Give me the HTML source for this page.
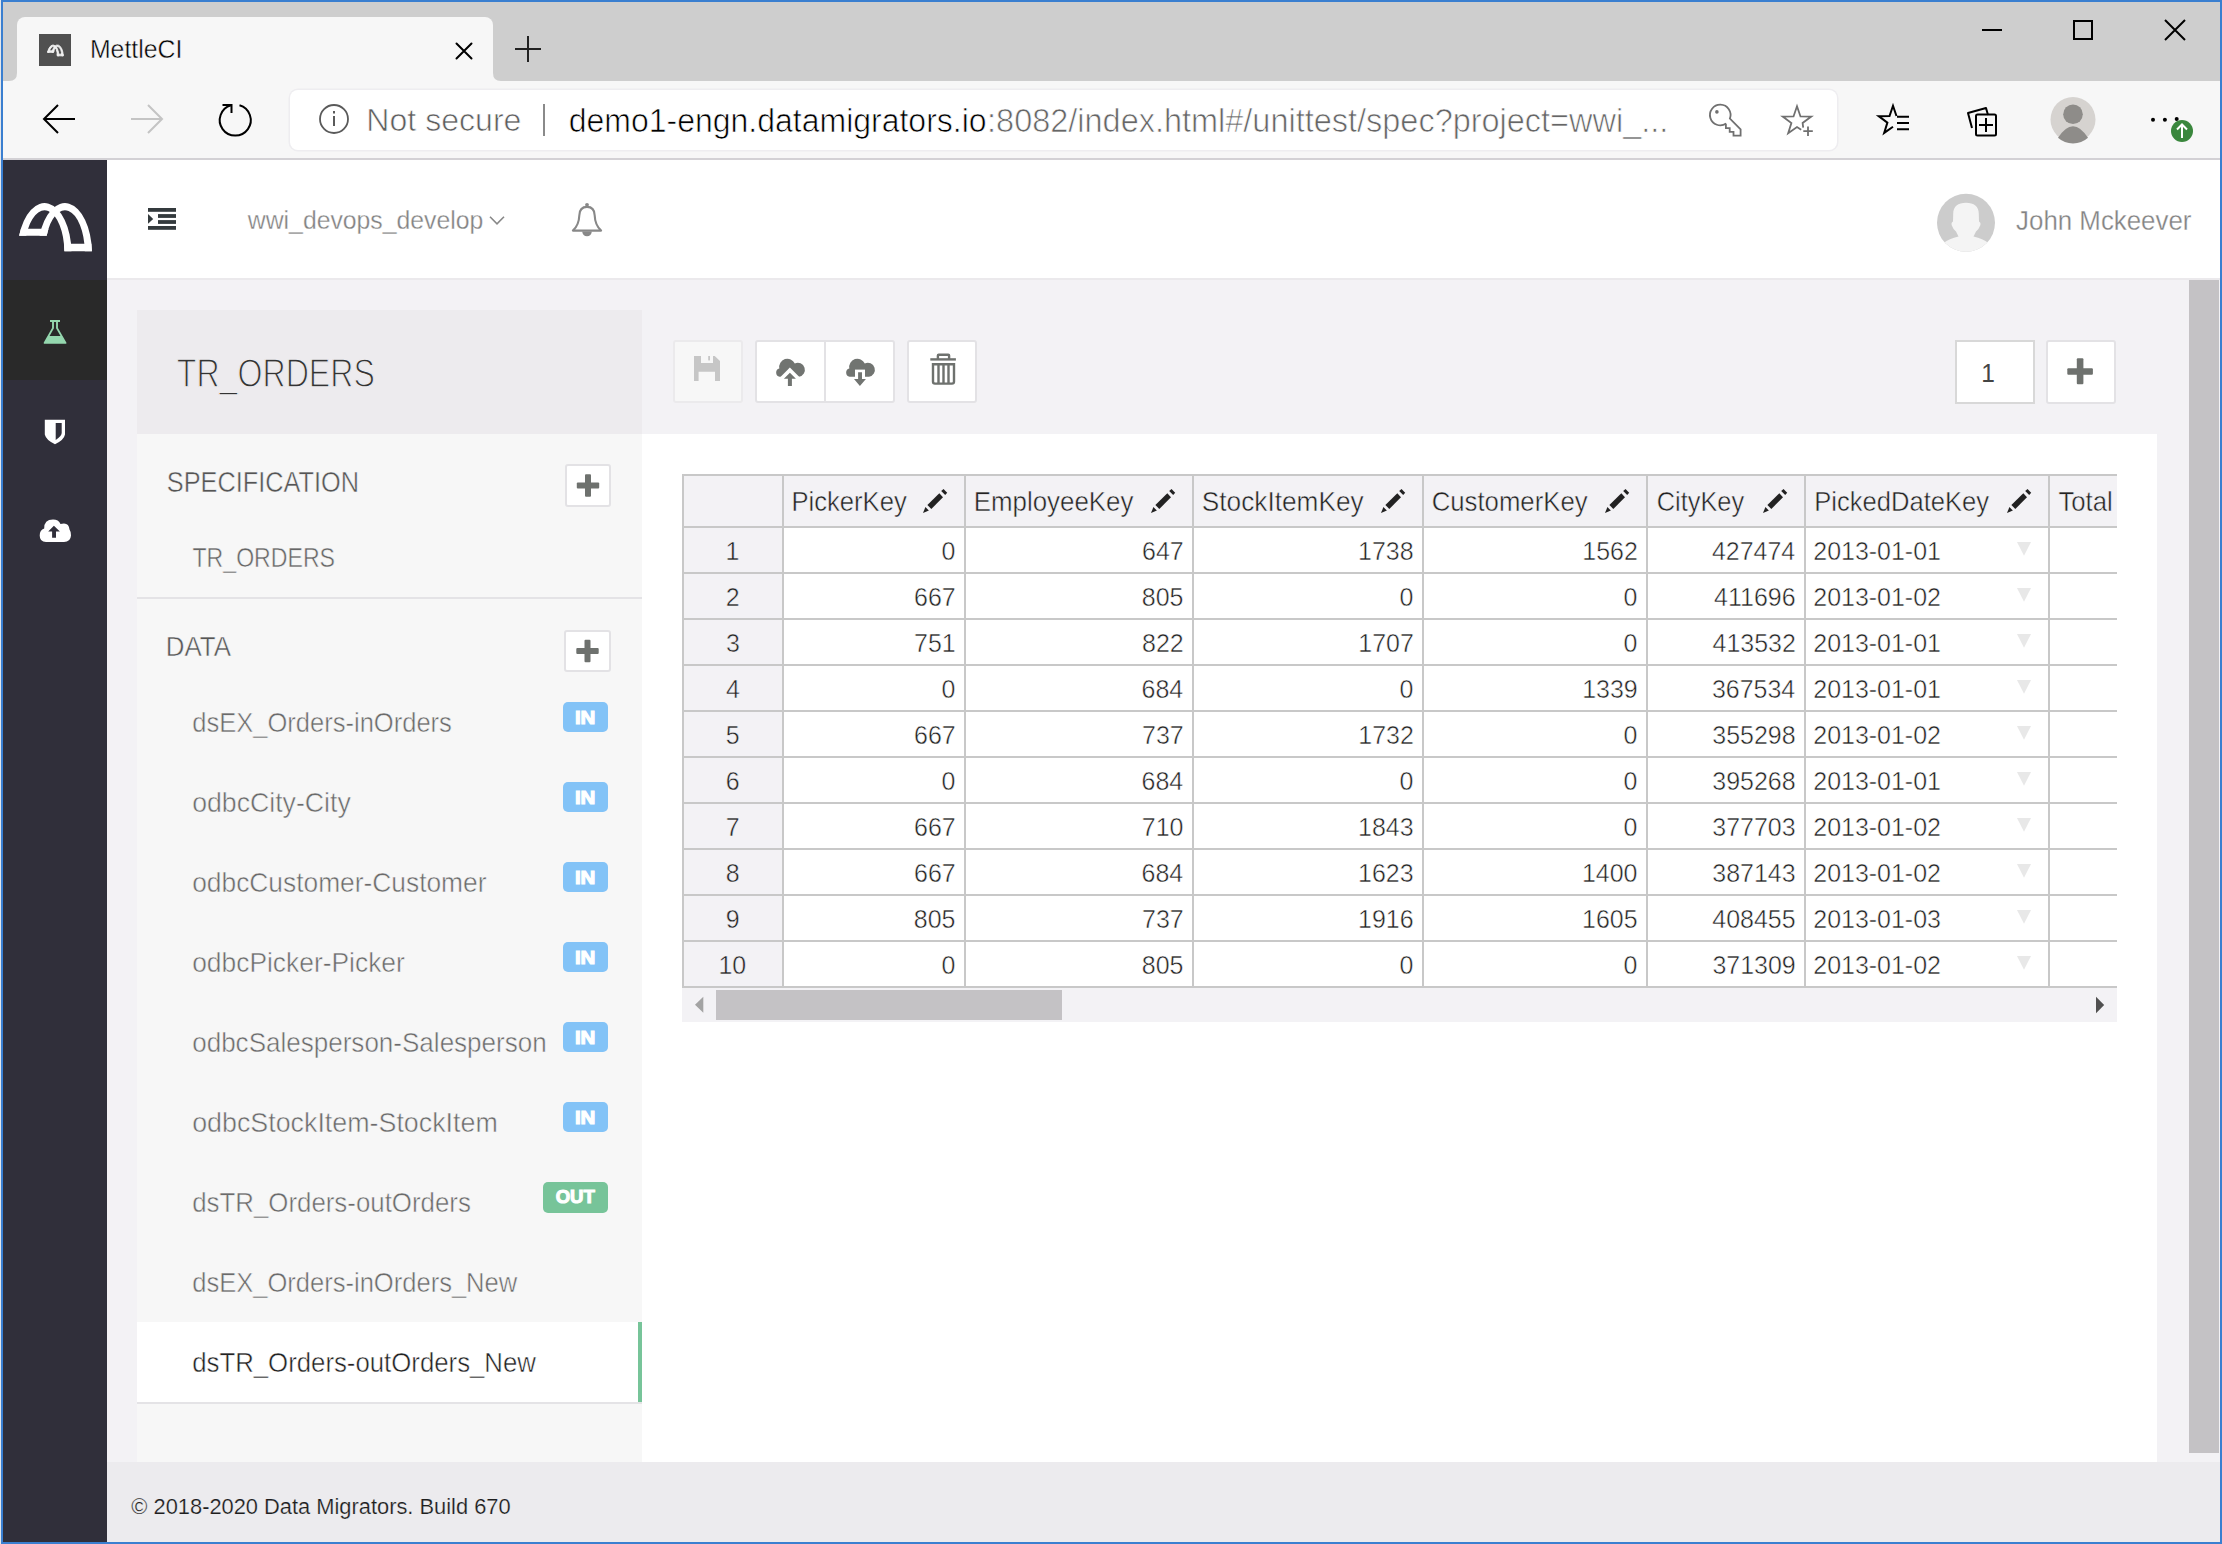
<!DOCTYPE html>
<html><head><meta charset="utf-8"><title>MettleCI</title>
<style>
html,body{margin:0;padding:0;}
body{width:2222px;height:1544px;position:relative;overflow:hidden;background:#3a7fd0;font-family:"Liberation Sans",sans-serif;}
#root>div{position:absolute;}
#root>svg{position:absolute;}
svg text{font-family:"Liberation Sans",sans-serif;white-space:pre;}
</style></head><body><div id="root">
<div style="left:0px;top:0px;width:1px;height:1544px;background:#e4e6ea;"></div>
<div style="left:3px;top:2px;width:2217px;height:1540px;background:#f3f2f5;"></div>
<div style="left:3px;top:2px;width:2217px;height:79px;background:#cecece;"></div>
<div style="left:17px;top:17px;width:476px;height:64px;background:#f7f7f7;border-radius:8px 8px 0 0"></div>
<div style="left:3px;top:81px;width:2217px;height:77px;background:#f7f7f7;"></div>
<div style="left:3px;top:158px;width:2217px;height:2px;background:#d3d1d5;"></div>
<div style="left:290px;top:90px;width:1547px;height:60px;background:#ffffff;border-radius:8px;box-shadow:0 0 0 1.5px #eeedf0"></div>
<div style="left:3px;top:160px;width:104px;height:1382px;background:#302f3a;"></div>
<div style="left:3px;top:280px;width:104px;height:100px;background:#292929;"></div>
<div style="left:107px;top:160px;width:2113px;height:118px;background:#ffffff;"></div>
<div style="left:107px;top:278px;width:2113px;height:2px;background:#ebe9ec;"></div>
<div style="left:107px;top:280px;width:2082px;height:1182px;background:#f3f2f5;"></div>
<div style="left:2189px;top:280px;width:31px;height:1182px;background:#f3f2f5;"></div>
<div style="left:2189px;top:280px;width:30px;height:1173px;background:#c4c2c5;"></div>
<div style="left:107px;top:1462px;width:2113px;height:80px;background:#ecebee;"></div>
<div style="left:137px;top:310px;width:505px;height:124px;background:#edebee;"></div>
<div style="left:137px;top:434px;width:505px;height:1028px;background:#f7f7f7;"></div>
<div style="left:642px;top:434px;width:1515px;height:1028px;background:#ffffff;"></div>
<div style="left:137px;top:597px;width:505px;height:2px;background:#e4e3e6;"></div>
<div style="left:565px;top:464px;width:46px;height:43px;background:#ffffff;box-sizing:border-box;border:2px solid #e3e2e5;border-radius:3px"></div>
<div style="left:564px;top:630px;width:47px;height:42px;background:#ffffff;box-sizing:border-box;border:2px solid #e3e2e5;border-radius:3px"></div>
<div style="left:137px;top:1322px;width:505px;height:80px;background:#ffffff;"></div>
<div style="left:137px;top:1402px;width:505px;height:2px;background:#e4e3e6;"></div>
<div style="left:638px;top:1322px;width:4px;height:80px;background:#77c499;"></div>
<div style="left:563px;top:702px;width:45px;height:30px;background:#83c3f7;border-radius:5px"></div>
<div style="left:563px;top:782px;width:45px;height:30px;background:#83c3f7;border-radius:5px"></div>
<div style="left:563px;top:862px;width:45px;height:30px;background:#83c3f7;border-radius:5px"></div>
<div style="left:563px;top:942px;width:45px;height:30px;background:#83c3f7;border-radius:5px"></div>
<div style="left:563px;top:1022px;width:45px;height:30px;background:#83c3f7;border-radius:5px"></div>
<div style="left:563px;top:1102px;width:45px;height:30px;background:#83c3f7;border-radius:5px"></div>
<div style="left:543px;top:1182px;width:65px;height:31px;background:#77c499;border-radius:5px"></div>
<div style="left:673px;top:340px;width:70px;height:63px;background:#f7f7f7;box-sizing:border-box;border:2px solid #ebeaec;border-radius:3px;"></div>
<div style="left:755px;top:340px;width:140px;height:63px;background:#ffffff;box-sizing:border-box;border:2px solid #e3e2e5;border-radius:3px;"></div>
<div style="left:824px;top:342px;width:2px;height:59px;background:#e3e2e5;"></div>
<div style="left:907px;top:340px;width:70px;height:63px;background:#ffffff;box-sizing:border-box;border:2px solid #e3e2e5;border-radius:3px;"></div>
<div style="left:1955px;top:340px;width:80px;height:64px;background:#ffffff;box-sizing:border-box;border:2px solid #d8d8d8"></div>
<div style="left:2046px;top:340px;width:70px;height:64px;background:#ffffff;box-sizing:border-box;border:2px solid #e3e2e5;border-radius:3px;"></div>
<div style="left:682px;top:474px;width:1435px;height:54px;background:#f3f2f5;"></div>
<div style="left:682px;top:528px;width:102px;height:460px;background:#f3f2f5;"></div>
<div style="left:682px;top:474px;width:1435px;height:2px;background:#c8c8c8;"></div>
<div style="left:682px;top:526px;width:1435px;height:2px;background:#c8c8c8;"></div>
<div style="left:682px;top:572px;width:1435px;height:2px;background:#c8c8c8;"></div>
<div style="left:682px;top:618px;width:1435px;height:2px;background:#c8c8c8;"></div>
<div style="left:682px;top:664px;width:1435px;height:2px;background:#c8c8c8;"></div>
<div style="left:682px;top:710px;width:1435px;height:2px;background:#c8c8c8;"></div>
<div style="left:682px;top:756px;width:1435px;height:2px;background:#c8c8c8;"></div>
<div style="left:682px;top:802px;width:1435px;height:2px;background:#c8c8c8;"></div>
<div style="left:682px;top:848px;width:1435px;height:2px;background:#c8c8c8;"></div>
<div style="left:682px;top:894px;width:1435px;height:2px;background:#c8c8c8;"></div>
<div style="left:682px;top:940px;width:1435px;height:2px;background:#c8c8c8;"></div>
<div style="left:682px;top:986px;width:1435px;height:2px;background:#c8c8c8;"></div>
<div style="left:682px;top:474px;width:2px;height:514px;background:#c8c8c8;"></div>
<div style="left:782px;top:474px;width:2px;height:514px;background:#c8c8c8;"></div>
<div style="left:964px;top:474px;width:2px;height:514px;background:#c8c8c8;"></div>
<div style="left:1192px;top:474px;width:2px;height:514px;background:#c8c8c8;"></div>
<div style="left:1422px;top:474px;width:2px;height:514px;background:#c8c8c8;"></div>
<div style="left:1646px;top:474px;width:2px;height:514px;background:#c8c8c8;"></div>
<div style="left:1804px;top:474px;width:2px;height:514px;background:#c8c8c8;"></div>
<div style="left:2048px;top:474px;width:2px;height:514px;background:#c8c8c8;"></div>
<div style="left:682px;top:988px;width:1435px;height:34px;background:#f3f2f5;"></div>
<div style="left:716px;top:990px;width:346px;height:30px;background:#c4c2c5;"></div>
<svg style="left:0;top:0" width="2222" height="1544" viewBox="0 0 2222 1544">
<path d="M9 81 Q17 81 17 73 L17 81 Z" fill="#f7f7f7"/>
<path d="M501 81 Q493 81 493 73 L493 81 Z" fill="#f7f7f7"/>
<rect x="39" y="34" width="32" height="32" fill="#505050"/>
<g stroke="#000" stroke-width="2" stroke-linecap="round"><path d="M456.5 43.5 L471.5 58.5 M471.5 43.5 L456.5 58.5"/></g>
<g stroke="#222" stroke-width="2"><path d="M528 36 V62 M515 49 H541"/></g>
<g stroke="#000" stroke-width="2" fill="none"><path d="M1982 30 H2002"/><rect x="2074" y="21" width="18" height="18"/><path d="M2165 20 L2185 40 M2185 20 L2165 40"/></g>
<g fill="none" stroke="#000" stroke-width="2"><path d="M75 119 H45 M58 105 L44 119 L58 133"/></g>
<g fill="none" stroke="#c4c4c4" stroke-width="2"><path d="M131 119 H161 M148 105 L162 119 L148 133"/></g>
<g fill="none" stroke="#000" stroke-width="2"><path d="M231 105.2 A15.5 15.5 0 1 0 239.5 105.2"/><path d="M222.5 105 H231.5 V113"/></g>
<circle cx="334" cy="119" r="14" fill="none" stroke="#5a5a5a" stroke-width="1.8"/><rect x="333" y="116" width="2" height="10" fill="#5a5a5a"/><rect x="333" y="111" width="2" height="2.5" fill="#5a5a5a"/>
<rect x="543" y="104" width="2" height="32" fill="#8a8a8a"/>
<g fill="none" stroke="#707070" stroke-width="1.8" stroke-linejoin="miter"><path d="M1726.2 123.4 A10.3 10.3 0 1 1 1729.9 118.6 L1740.6 129.4 V135.6 H1733.5 V131.8 H1729.7 V128.2 H1725.9 V123.8"/></g><circle cx="1716.9" cy="111.9" r="1.8" fill="#707070"/>
<g fill="none" stroke="#707070" stroke-width="1.8" stroke-linejoin="miter"><path d="M1803.20 127.60 L1802.61 123.02 L1811.27 116.56 L1800.47 116.43 L1797.00 106.20 L1793.53 116.43 L1782.73 116.56 L1791.39 123.02 L1788.18 133.34 L1797.00 127.10 L1801.20 129.80"/><path d="M1808 126.5 V136 M1803.3 131.2 H1812.8"/></g>
<g fill="none" stroke="#000" stroke-width="2" stroke-linejoin="miter"><path d="M1896.47 116.03 L1893.00 105.80 L1889.53 116.03 L1878.73 116.16 L1887.39 122.62 L1884.18 132.94 L1893.00 126.70"/><path d="M1897 116.8 H1909 M1897 123 H1909 M1897 129.2 H1909"/></g>
<g fill="none" stroke="#000" stroke-width="2" stroke-linejoin="round"><path d="M1972 128 L1968 113 L1986 108 L1988 115"/><rect x="1976" y="114.5" width="20" height="21" rx="1.5"/><path d="M1986 118 V132 M1979 125 H1993"/></g>
<circle cx="2073" cy="119.5" r="22.5" fill="#d6d3d0"/><circle cx="2073" cy="114.2" r="9.8" fill="#8e8c89"/><path d="M2058 137.8 Q2073 114.5 2088 137.8 A22.5 22.5 0 0 1 2058 137.8 Z" fill="#8e8c89"/>
<circle cx="2153" cy="119.8" r="2" fill="#000"/><circle cx="2164.9" cy="119.8" r="2" fill="#000"/><circle cx="2176.7" cy="119" r="2" fill="#000"/>
<circle cx="2182" cy="131" r="11" fill="#3a873d"/><path d="M2182 138 V124.5 M2177 129.5 L2182 124.5 L2187 129.5" stroke="#fff" stroke-width="2" fill="none"/>
<g fill="#fff"><path d="M19.15 235.8 A27.0 49.9 0 0 1 71.48 251.2 L64.38 251.2 A19.9 42.8 0 0 0 26.28 235.8 Z"/><path d="M39.55 235.8 A27.0 49.9 0 0 1 91.88 251.2 L84.78 251.2 A19.9 42.8 0 0 0 46.68 235.8 Z"/><path d="M19.15 235.8 L46.68 235.8 L48.49 228.8 L20.89 228.8 Z"/><path d="M64.38 251.2 L91.88 251.2 L91.43 243.7 L63.92 243.7 Z"/></g>
<g fill="#f0f0f0" stroke="#f0f0f0" stroke-width="4" transform="translate(43.49,-0.70) scale(0.215,0.225)"><path d="M19.15 235.8 A27.0 49.9 0 0 1 71.48 251.2 L64.38 251.2 A19.9 42.8 0 0 0 26.28 235.8 Z"/><path d="M39.55 235.8 A27.0 49.9 0 0 1 91.88 251.2 L84.78 251.2 A19.9 42.8 0 0 0 46.68 235.8 Z"/><path d="M19.15 235.8 L46.68 235.8 L48.49 228.8 L20.89 228.8 Z"/><path d="M64.38 251.2 L91.88 251.2 L91.43 243.7 L63.92 243.7 Z"/></g>
<g fill="#343a3d"><rect x="148" y="208" width="28" height="3.8"/><rect x="158" y="214.1" width="18" height="3.8"/><rect x="158" y="220.1" width="18" height="3.8"/><rect x="148" y="226" width="28" height="3.8"/><path d="M148 214 L153.2 218.9 L148 223.8 Z"/></g>
<path d="M490 216.8 L497 223.8 L504 216.8" fill="none" stroke="#888" stroke-width="1.6"/>
<g fill="none" stroke="#888" stroke-width="2.1"><path d="M572.9 230.6 Q579 225 579.3 215.5 Q579.5 206.9 587 206.9 Q594.5 206.9 594.7 215.5 Q595 225 601.1 230.6 Z" stroke-linejoin="round"/></g><circle cx="587" cy="204.8" r="1.9" fill="#888"/><path d="M582.2 231.5 A4.8 4.8 0 0 0 591.8 231.5 Z" fill="#888"/>
<circle cx="1966" cy="222.8" r="29" fill="#cccccc"/><clipPath id="avc"><circle cx="1966" cy="222.8" r="29"/></clipPath><g clip-path="url(#avc)" fill="#f4f4f4"><path d="M1953.2 214 C1953.2 206 1958 202.7 1966 202.7 C1974 202.7 1978.8 206 1978.8 214 L1979 221.5 Q1981.2 222.5 1980.2 225.5 Q1979 229 1976 231.5 L1973.5 236.5 Q1983 238.5 1988.5 243 L1996 260 L1936 260 L1943.5 243 Q1949 238.5 1958.5 236.5 L1956 231.5 Q1953 229 1951.8 225.5 Q1950.8 222.5 1953 221.5 Z"/></g>
<g fill="#94d7ae"><rect x="50" y="320" width="10" height="2"/></g><path d="M53 321.5 V328.1 L44.6 342.9 H65.5 L57 328.1 V321.5" fill="none" stroke="#94d7ae" stroke-width="1.9" stroke-linejoin="round"/><path d="M48.4 335.9 H61.6 L65.5 342.9 H44.6 Z" fill="#94d7ae"/>
<path fill="#fff" fill-rule="evenodd" d="M44.8 419.8 H65 V434.5 Q64 440 55 444.2 Q46 440 44.8 434.5 Z M55.7 423.1 V440 Q61.7 436 61.7 433 V423.1 Z"/>
<path fill="#fff" fill-rule="evenodd" d="M46 542 Q39.7 542 39.7 535.5 Q39.7 530 44.2 528.6 Q44 519.6 53 519.6 Q58.5 519.6 60.5 524 Q62 523.5 64 523.5 Q69 523.5 69.5 529.5 Q71 531.5 71 535.5 Q70.5 542 64 542 Z M53.9 525.8 L48.2 531.5 H52.1 V537.7 H56 V531.5 H59.9 Z"/>
<g fill="#6e716e"><rect x="576.8" y="482.5" width="22.4" height="6" rx="1"/><rect x="585.0" y="474.3" width="6" height="22.4" rx="1"/></g>
<g fill="#6e716e"><rect x="576.3" y="648.0" width="22.4" height="6" rx="1"/><rect x="584.5" y="639.8" width="6" height="22.4" rx="1"/></g>
<path fill="#c6c6c6" fill-rule="evenodd" d="M694 356 H701 V363 H713 V356 H714.7 L720 361 V381.1 H715 V371.8 H698.6 V381.1 H694 Z"/><rect x="708.2" y="356" width="1.8" height="4.4" fill="#c6c6c6"/>
<path fill="#717471" d="M779.6 376.7 A4.2 4.2 0 0 1 779.3 368.5 A8.2 8.4 0 0 1 794.8 363.5 A7 7 0 1 1 799 376.7 Z"/>
<path fill="#ffffff" d="M789.9 367.6 L801.1 378.8 H778.7 Z"/>
<path fill="#717471" d="M789.9 372.8 L795.9 378.8 H791.9 V385.9 H787.9 V378.8 H783.9 Z"/>
<path fill="#717471" d="M849.6 376.7 A4.2 4.2 0 0 1 849.3 368.5 A8.2 8.4 0 0 1 864.8 363.5 A7 7 0 1 1 869 376.7 Z"/>
<rect x="855" y="369.6" width="10" height="8" fill="#fff"/>
<path fill="#717471" d="M858.1 372.3 H862 V379 H865.9 L859.9 385.9 L854 379 H858.1 Z"/>
<path fill="#fff" d="M856.5 376.5 V379 H854 Z M863.5 376.5 V379 H866 Z" opacity="0"/>
<g fill="none" stroke="#6e716e" stroke-width="2.4"><path d="M930.3 359.4 H955.9"/><path d="M937.9 359.4 V355.5 Q937.9 354.8 938.7 354.8 H948.3 Q949.1 354.8 949.1 355.5 V359.4"/><path d="M933 364.3 V381.5 Q933 383.6 935 383.6 H952 Q954 383.6 954 381.5 V364.3 Z"/><path d="M938.5 364.3 V383 M943.5 364.3 V383 M948.5 364.3 V383"/></g>
<g fill="#6e716e"><rect x="2067.3" y="368.2" width="25.6" height="6.6" rx="1"/><rect x="2076.8" y="358.3" width="6.6" height="26" rx="1"/></g>
<g fill="#222" transform="translate(923.0,489)"><path d="M0 24.1 L2.4 18.1 L5.9 21.6 Z"/><path d="M4.4 16.1 L16.3 4.2 L20 8.2 L8.3 20.1 Z"/><path d="M18.2 2 L20.5 0 L24.2 3.8 L22.2 6 Z"/></g>
<g fill="#222" transform="translate(1151.0,489)"><path d="M0 24.1 L2.4 18.1 L5.9 21.6 Z"/><path d="M4.4 16.1 L16.3 4.2 L20 8.2 L8.3 20.1 Z"/><path d="M18.2 2 L20.5 0 L24.2 3.8 L22.2 6 Z"/></g>
<g fill="#222" transform="translate(1381.0,489)"><path d="M0 24.1 L2.4 18.1 L5.9 21.6 Z"/><path d="M4.4 16.1 L16.3 4.2 L20 8.2 L8.3 20.1 Z"/><path d="M18.2 2 L20.5 0 L24.2 3.8 L22.2 6 Z"/></g>
<g fill="#222" transform="translate(1605.0,489)"><path d="M0 24.1 L2.4 18.1 L5.9 21.6 Z"/><path d="M4.4 16.1 L16.3 4.2 L20 8.2 L8.3 20.1 Z"/><path d="M18.2 2 L20.5 0 L24.2 3.8 L22.2 6 Z"/></g>
<g fill="#222" transform="translate(1763.0,489)"><path d="M0 24.1 L2.4 18.1 L5.9 21.6 Z"/><path d="M4.4 16.1 L16.3 4.2 L20 8.2 L8.3 20.1 Z"/><path d="M18.2 2 L20.5 0 L24.2 3.8 L22.2 6 Z"/></g>
<g fill="#222" transform="translate(2007.0,489)"><path d="M0 24.1 L2.4 18.1 L5.9 21.6 Z"/><path d="M4.4 16.1 L16.3 4.2 L20 8.2 L8.3 20.1 Z"/><path d="M18.2 2 L20.5 0 L24.2 3.8 L22.2 6 Z"/></g>
<clipPath id="tclip"><rect x="682" y="474" width="1435" height="600"/></clipPath>
<path d="M2017 542 H2031 L2024 555.7 Z" fill="#e8e8e8"/>
<path d="M2017 588 H2031 L2024 601.7 Z" fill="#e8e8e8"/>
<path d="M2017 634 H2031 L2024 647.7 Z" fill="#e8e8e8"/>
<path d="M2017 680 H2031 L2024 693.7 Z" fill="#e8e8e8"/>
<path d="M2017 726 H2031 L2024 739.7 Z" fill="#e8e8e8"/>
<path d="M2017 772 H2031 L2024 785.7 Z" fill="#e8e8e8"/>
<path d="M2017 818 H2031 L2024 831.7 Z" fill="#e8e8e8"/>
<path d="M2017 864 H2031 L2024 877.7 Z" fill="#e8e8e8"/>
<path d="M2017 910 H2031 L2024 923.7 Z" fill="#e8e8e8"/>
<path d="M2017 956 H2031 L2024 969.7 Z" fill="#e8e8e8"/>
<path d="M703.3 996.8 V1012.8 L695 1004.8 Z" fill="#a3a3a3"/>
<path d="M2096 996.7 V1013.2 L2104.2 1005 Z" fill="#505050"/>
<text x="176.78" y="387.00" font-size="41.02" font-weight="normal" textLength="198.17" lengthAdjust="spacingAndGlyphs" fill="#333333" stroke="#edebee" stroke-width="1.3">TR_ORDERS</text>
<text x="166.86" y="491.60" font-size="29.96" font-weight="normal" textLength="192.19" lengthAdjust="spacingAndGlyphs" fill="#555555" stroke="#f7f7f7" stroke-width="0.5">SPECIFICATION</text>
<text x="192.48" y="567.20" font-size="27.49" font-weight="normal" textLength="142.56" lengthAdjust="spacingAndGlyphs" fill="#666666" stroke="#f7f7f7" stroke-width="0.5">TR_ORDERS</text>
<text x="165.87" y="656.30" font-size="28.36" font-weight="normal" textLength="65.16" lengthAdjust="spacingAndGlyphs" fill="#555555" stroke="#f7f7f7" stroke-width="0.5">DATA</text>
<text x="89.95" y="58.00" font-size="25.45" font-weight="normal" textLength="92.36" lengthAdjust="spacingAndGlyphs" fill="#000000" stroke="#f7f7f7" stroke-width="0.45">MettleCI</text>
<text x="366.36" y="131.40" font-size="32.15" font-weight="normal" textLength="155.03" lengthAdjust="spacingAndGlyphs" fill="#5e5e5e" stroke="#fff" stroke-width="0.7">Not secure</text>
<text x="568.74" y="132.00" font-size="32.83" font-weight="normal" textLength="417.87" lengthAdjust="spacingAndGlyphs" fill="#000000" stroke="#fff" stroke-width="0.7">demo1-engn.datamigrators.io</text>
<text x="987.08" y="132.00" font-size="32.83" font-weight="normal" textLength="681.23" lengthAdjust="spacingAndGlyphs" fill="#666666" stroke="#fff" stroke-width="0.7">:8082/index.html#/unittest/spec?project=wwi_...</text>
<text x="247.86" y="229.00" font-size="26.07" font-weight="normal" textLength="235.37" lengthAdjust="spacingAndGlyphs" fill="#838383" stroke="#ffffff" stroke-width="0.3">wwi_devops_develop</text>
<text x="2016.11" y="230.30" font-size="27.05" font-weight="normal" textLength="175.30" lengthAdjust="spacingAndGlyphs" fill="#838383" stroke="#ffffff" stroke-width="0.3">John Mckeever</text>
<text x="192.21" y="731.80" font-size="26.76" font-weight="normal" textLength="259.68" lengthAdjust="spacingAndGlyphs" fill="#6b6b6b" stroke="#f7f7f7" stroke-width="0.5">dsEX_Orders-inOrders</text>
<text x="574.92" y="723.50" font-size="17.75" font-weight="bold" textLength="20.46" lengthAdjust="spacingAndGlyphs" fill="#ffffff" stroke="#ffffff" stroke-width="1.1">IN</text>
<text x="192.17" y="811.80" font-size="26.76" font-weight="normal" textLength="158.63" lengthAdjust="spacingAndGlyphs" fill="#6b6b6b" stroke="#f7f7f7" stroke-width="0.5">odbcCity-City</text>
<text x="574.92" y="803.50" font-size="17.75" font-weight="bold" textLength="20.46" lengthAdjust="spacingAndGlyphs" fill="#ffffff" stroke="#ffffff" stroke-width="1.1">IN</text>
<text x="192.18" y="891.80" font-size="26.76" font-weight="normal" textLength="294.33" lengthAdjust="spacingAndGlyphs" fill="#6b6b6b" stroke="#f7f7f7" stroke-width="0.5">odbcCustomer-Customer</text>
<text x="574.92" y="883.50" font-size="17.75" font-weight="bold" textLength="20.46" lengthAdjust="spacingAndGlyphs" fill="#ffffff" stroke="#ffffff" stroke-width="1.1">IN</text>
<text x="192.18" y="971.80" font-size="26.76" font-weight="normal" textLength="212.64" lengthAdjust="spacingAndGlyphs" fill="#6b6b6b" stroke="#f7f7f7" stroke-width="0.5">odbcPicker-Picker</text>
<text x="574.92" y="963.50" font-size="17.75" font-weight="bold" textLength="20.46" lengthAdjust="spacingAndGlyphs" fill="#ffffff" stroke="#ffffff" stroke-width="1.1">IN</text>
<text x="192.19" y="1051.80" font-size="26.76" font-weight="normal" textLength="354.53" lengthAdjust="spacingAndGlyphs" fill="#6b6b6b" stroke="#f7f7f7" stroke-width="0.5">odbcSalesperson-Salesperson</text>
<text x="574.92" y="1043.50" font-size="17.75" font-weight="bold" textLength="20.46" lengthAdjust="spacingAndGlyphs" fill="#ffffff" stroke="#ffffff" stroke-width="1.1">IN</text>
<text x="192.16" y="1131.80" font-size="26.76" font-weight="normal" textLength="305.61" lengthAdjust="spacingAndGlyphs" fill="#6b6b6b" stroke="#f7f7f7" stroke-width="0.5">odbcStockItem-StockItem</text>
<text x="574.92" y="1123.50" font-size="17.75" font-weight="bold" textLength="20.46" lengthAdjust="spacingAndGlyphs" fill="#ffffff" stroke="#ffffff" stroke-width="1.1">IN</text>
<text x="192.20" y="1211.80" font-size="26.76" font-weight="normal" textLength="278.63" lengthAdjust="spacingAndGlyphs" fill="#6b6b6b" stroke="#f7f7f7" stroke-width="0.5">dsTR_Orders-outOrders</text>
<text x="555.66" y="1203.40" font-size="18.91" font-weight="bold" textLength="39.25" lengthAdjust="spacingAndGlyphs" fill="#ffffff" stroke="#ffffff" stroke-width="1.1">OUT</text>
<text x="192.21" y="1291.80" font-size="26.76" font-weight="normal" textLength="325.00" lengthAdjust="spacingAndGlyphs" fill="#6b6b6b" stroke="#f7f7f7" stroke-width="0.5">dsEX_Orders-inOrders_New</text>
<text x="192.20" y="1371.80" font-size="26.76" font-weight="normal" textLength="343.74" lengthAdjust="spacingAndGlyphs" fill="#222222" stroke="#ffffff" stroke-width="0.5">dsTR_Orders-outOrders_New</text>
<text x="131.37" y="1513.90" font-size="21.93" font-weight="normal" textLength="379.27" lengthAdjust="spacingAndGlyphs" fill="#1e1e1e" stroke="#ecebee" stroke-width="0.2">© 2018-2020 Data Migrators. Build 670</text>
<text x="1981.16" y="382.00" font-size="26.18" font-weight="normal" textLength="13.63" lengthAdjust="spacingAndGlyphs" fill="#444444">1</text>
<text x="791.39" y="511.30" font-size="28.07" font-weight="normal" textLength="115.35" lengthAdjust="spacingAndGlyphs" fill="#222222" stroke="#f3f2f5" stroke-width="0.5">PickerKey</text>
<text x="973.76" y="511.30" font-size="28.07" font-weight="normal" textLength="159.70" lengthAdjust="spacingAndGlyphs" fill="#222222" stroke="#f3f2f5" stroke-width="0.5">EmployeeKey</text>
<text x="1201.82" y="511.30" font-size="28.07" font-weight="normal" textLength="161.82" lengthAdjust="spacingAndGlyphs" fill="#222222" stroke="#f3f2f5" stroke-width="0.5">StockItemKey</text>
<text x="1431.71" y="511.30" font-size="28.07" font-weight="normal" textLength="155.86" lengthAdjust="spacingAndGlyphs" fill="#222222" stroke="#f3f2f5" stroke-width="0.5">CustomerKey</text>
<text x="1656.73" y="511.30" font-size="28.07" font-weight="normal" textLength="87.34" lengthAdjust="spacingAndGlyphs" fill="#222222" stroke="#f3f2f5" stroke-width="0.5">CityKey</text>
<text x="1814.19" y="511.30" font-size="28.07" font-weight="normal" textLength="174.86" lengthAdjust="spacingAndGlyphs" fill="#222222" stroke="#f3f2f5" stroke-width="0.5">PickedDateKey</text>
<g clip-path="url(#tclip)">
<text x="2058.42" y="511.30" font-size="28.07" font-weight="normal" textLength="54.36" lengthAdjust="spacingAndGlyphs" fill="#222222" stroke="#f3f2f5" stroke-width="0.5">Total</text>
</g>
<text x="725.53" y="559.50" font-size="26.18" font-weight="normal" textLength="13.88" lengthAdjust="spacingAndGlyphs" fill="#222222" stroke="#f3f2f5" stroke-width="0.5">1</text>
<text x="941.58" y="559.50" font-size="26.18" font-weight="normal" textLength="13.88" lengthAdjust="spacingAndGlyphs" fill="#222222" stroke="#ffffff" stroke-width="0.5">0</text>
<text x="1142.12" y="559.50" font-size="26.18" font-weight="normal" textLength="41.65" lengthAdjust="spacingAndGlyphs" fill="#222222" stroke="#ffffff" stroke-width="0.5">647</text>
<text x="1358.08" y="559.50" font-size="26.18" font-weight="normal" textLength="55.53" lengthAdjust="spacingAndGlyphs" fill="#222222" stroke="#ffffff" stroke-width="0.5">1738</text>
<text x="1582.27" y="559.50" font-size="26.18" font-weight="normal" textLength="55.53" lengthAdjust="spacingAndGlyphs" fill="#222222" stroke="#ffffff" stroke-width="0.5">1562</text>
<text x="1711.94" y="559.50" font-size="26.18" font-weight="normal" textLength="83.30" lengthAdjust="spacingAndGlyphs" fill="#222222" stroke="#ffffff" stroke-width="0.5">427474</text>
<text x="1813.25" y="559.50" font-size="26.18" font-weight="normal" textLength="127.69" lengthAdjust="spacingAndGlyphs" fill="#222222" stroke="#ffffff" stroke-width="0.5">2013-01-01</text>
<text x="725.87" y="605.50" font-size="26.18" font-weight="normal" textLength="13.88" lengthAdjust="spacingAndGlyphs" fill="#222222" stroke="#f3f2f5" stroke-width="0.5">2</text>
<text x="914.12" y="605.50" font-size="26.18" font-weight="normal" textLength="41.65" lengthAdjust="spacingAndGlyphs" fill="#222222" stroke="#ffffff" stroke-width="0.5">667</text>
<text x="1141.87" y="605.50" font-size="26.18" font-weight="normal" textLength="41.65" lengthAdjust="spacingAndGlyphs" fill="#222222" stroke="#ffffff" stroke-width="0.5">805</text>
<text x="1399.58" y="605.50" font-size="26.18" font-weight="normal" textLength="13.88" lengthAdjust="spacingAndGlyphs" fill="#222222" stroke="#ffffff" stroke-width="0.5">0</text>
<text x="1623.58" y="605.50" font-size="26.18" font-weight="normal" textLength="13.88" lengthAdjust="spacingAndGlyphs" fill="#222222" stroke="#ffffff" stroke-width="0.5">0</text>
<text x="1714.12" y="605.50" font-size="26.18" font-weight="normal" textLength="81.45" lengthAdjust="spacingAndGlyphs" fill="#222222" stroke="#ffffff" stroke-width="0.5">411696</text>
<text x="1813.25" y="605.50" font-size="26.18" font-weight="normal" textLength="127.69" lengthAdjust="spacingAndGlyphs" fill="#222222" stroke="#ffffff" stroke-width="0.5">2013-01-02</text>
<text x="725.94" y="651.50" font-size="26.18" font-weight="normal" textLength="13.88" lengthAdjust="spacingAndGlyphs" fill="#222222" stroke="#f3f2f5" stroke-width="0.5">3</text>
<text x="914.06" y="651.50" font-size="26.18" font-weight="normal" textLength="41.65" lengthAdjust="spacingAndGlyphs" fill="#222222" stroke="#ffffff" stroke-width="0.5">751</text>
<text x="1142.12" y="651.50" font-size="26.18" font-weight="normal" textLength="41.65" lengthAdjust="spacingAndGlyphs" fill="#222222" stroke="#ffffff" stroke-width="0.5">822</text>
<text x="1358.27" y="651.50" font-size="26.18" font-weight="normal" textLength="55.53" lengthAdjust="spacingAndGlyphs" fill="#222222" stroke="#ffffff" stroke-width="0.5">1707</text>
<text x="1623.58" y="651.50" font-size="26.18" font-weight="normal" textLength="13.88" lengthAdjust="spacingAndGlyphs" fill="#222222" stroke="#ffffff" stroke-width="0.5">0</text>
<text x="1712.50" y="651.50" font-size="26.18" font-weight="normal" textLength="83.30" lengthAdjust="spacingAndGlyphs" fill="#222222" stroke="#ffffff" stroke-width="0.5">413532</text>
<text x="1813.25" y="651.50" font-size="26.18" font-weight="normal" textLength="127.69" lengthAdjust="spacingAndGlyphs" fill="#222222" stroke="#ffffff" stroke-width="0.5">2013-01-01</text>
<text x="725.94" y="697.50" font-size="26.18" font-weight="normal" textLength="13.88" lengthAdjust="spacingAndGlyphs" fill="#222222" stroke="#f3f2f5" stroke-width="0.5">4</text>
<text x="941.58" y="697.50" font-size="26.18" font-weight="normal" textLength="13.88" lengthAdjust="spacingAndGlyphs" fill="#222222" stroke="#ffffff" stroke-width="0.5">0</text>
<text x="1141.56" y="697.50" font-size="26.18" font-weight="normal" textLength="41.65" lengthAdjust="spacingAndGlyphs" fill="#222222" stroke="#ffffff" stroke-width="0.5">684</text>
<text x="1399.58" y="697.50" font-size="26.18" font-weight="normal" textLength="13.88" lengthAdjust="spacingAndGlyphs" fill="#222222" stroke="#ffffff" stroke-width="0.5">0</text>
<text x="1582.15" y="697.50" font-size="26.18" font-weight="normal" textLength="55.53" lengthAdjust="spacingAndGlyphs" fill="#222222" stroke="#ffffff" stroke-width="0.5">1339</text>
<text x="1711.94" y="697.50" font-size="26.18" font-weight="normal" textLength="83.30" lengthAdjust="spacingAndGlyphs" fill="#222222" stroke="#ffffff" stroke-width="0.5">367534</text>
<text x="1813.25" y="697.50" font-size="26.18" font-weight="normal" textLength="127.69" lengthAdjust="spacingAndGlyphs" fill="#222222" stroke="#ffffff" stroke-width="0.5">2013-01-01</text>
<text x="725.87" y="743.50" font-size="26.18" font-weight="normal" textLength="13.88" lengthAdjust="spacingAndGlyphs" fill="#222222" stroke="#f3f2f5" stroke-width="0.5">5</text>
<text x="914.12" y="743.50" font-size="26.18" font-weight="normal" textLength="41.65" lengthAdjust="spacingAndGlyphs" fill="#222222" stroke="#ffffff" stroke-width="0.5">667</text>
<text x="1142.12" y="743.50" font-size="26.18" font-weight="normal" textLength="41.65" lengthAdjust="spacingAndGlyphs" fill="#222222" stroke="#ffffff" stroke-width="0.5">737</text>
<text x="1358.27" y="743.50" font-size="26.18" font-weight="normal" textLength="55.53" lengthAdjust="spacingAndGlyphs" fill="#222222" stroke="#ffffff" stroke-width="0.5">1732</text>
<text x="1623.58" y="743.50" font-size="26.18" font-weight="normal" textLength="13.88" lengthAdjust="spacingAndGlyphs" fill="#222222" stroke="#ffffff" stroke-width="0.5">0</text>
<text x="1712.31" y="743.50" font-size="26.18" font-weight="normal" textLength="83.30" lengthAdjust="spacingAndGlyphs" fill="#222222" stroke="#ffffff" stroke-width="0.5">355298</text>
<text x="1813.25" y="743.50" font-size="26.18" font-weight="normal" textLength="127.69" lengthAdjust="spacingAndGlyphs" fill="#222222" stroke="#ffffff" stroke-width="0.5">2013-01-02</text>
<text x="725.78" y="789.50" font-size="26.18" font-weight="normal" textLength="13.88" lengthAdjust="spacingAndGlyphs" fill="#222222" stroke="#f3f2f5" stroke-width="0.5">6</text>
<text x="941.58" y="789.50" font-size="26.18" font-weight="normal" textLength="13.88" lengthAdjust="spacingAndGlyphs" fill="#222222" stroke="#ffffff" stroke-width="0.5">0</text>
<text x="1141.56" y="789.50" font-size="26.18" font-weight="normal" textLength="41.65" lengthAdjust="spacingAndGlyphs" fill="#222222" stroke="#ffffff" stroke-width="0.5">684</text>
<text x="1399.58" y="789.50" font-size="26.18" font-weight="normal" textLength="13.88" lengthAdjust="spacingAndGlyphs" fill="#222222" stroke="#ffffff" stroke-width="0.5">0</text>
<text x="1623.58" y="789.50" font-size="26.18" font-weight="normal" textLength="13.88" lengthAdjust="spacingAndGlyphs" fill="#222222" stroke="#ffffff" stroke-width="0.5">0</text>
<text x="1712.31" y="789.50" font-size="26.18" font-weight="normal" textLength="83.30" lengthAdjust="spacingAndGlyphs" fill="#222222" stroke="#ffffff" stroke-width="0.5">395268</text>
<text x="1813.25" y="789.50" font-size="26.18" font-weight="normal" textLength="127.69" lengthAdjust="spacingAndGlyphs" fill="#222222" stroke="#ffffff" stroke-width="0.5">2013-01-01</text>
<text x="725.87" y="835.50" font-size="26.18" font-weight="normal" textLength="13.88" lengthAdjust="spacingAndGlyphs" fill="#222222" stroke="#f3f2f5" stroke-width="0.5">7</text>
<text x="914.12" y="835.50" font-size="26.18" font-weight="normal" textLength="41.65" lengthAdjust="spacingAndGlyphs" fill="#222222" stroke="#ffffff" stroke-width="0.5">667</text>
<text x="1141.81" y="835.50" font-size="26.18" font-weight="normal" textLength="41.65" lengthAdjust="spacingAndGlyphs" fill="#222222" stroke="#ffffff" stroke-width="0.5">710</text>
<text x="1358.08" y="835.50" font-size="26.18" font-weight="normal" textLength="55.53" lengthAdjust="spacingAndGlyphs" fill="#222222" stroke="#ffffff" stroke-width="0.5">1843</text>
<text x="1623.58" y="835.50" font-size="26.18" font-weight="normal" textLength="13.88" lengthAdjust="spacingAndGlyphs" fill="#222222" stroke="#ffffff" stroke-width="0.5">0</text>
<text x="1712.31" y="835.50" font-size="26.18" font-weight="normal" textLength="83.30" lengthAdjust="spacingAndGlyphs" fill="#222222" stroke="#ffffff" stroke-width="0.5">377703</text>
<text x="1813.25" y="835.50" font-size="26.18" font-weight="normal" textLength="127.69" lengthAdjust="spacingAndGlyphs" fill="#222222" stroke="#ffffff" stroke-width="0.5">2013-01-02</text>
<text x="725.87" y="881.50" font-size="26.18" font-weight="normal" textLength="13.88" lengthAdjust="spacingAndGlyphs" fill="#222222" stroke="#f3f2f5" stroke-width="0.5">8</text>
<text x="914.12" y="881.50" font-size="26.18" font-weight="normal" textLength="41.65" lengthAdjust="spacingAndGlyphs" fill="#222222" stroke="#ffffff" stroke-width="0.5">667</text>
<text x="1141.56" y="881.50" font-size="26.18" font-weight="normal" textLength="41.65" lengthAdjust="spacingAndGlyphs" fill="#222222" stroke="#ffffff" stroke-width="0.5">684</text>
<text x="1358.08" y="881.50" font-size="26.18" font-weight="normal" textLength="55.53" lengthAdjust="spacingAndGlyphs" fill="#222222" stroke="#ffffff" stroke-width="0.5">1623</text>
<text x="1581.96" y="881.50" font-size="26.18" font-weight="normal" textLength="55.53" lengthAdjust="spacingAndGlyphs" fill="#222222" stroke="#ffffff" stroke-width="0.5">1400</text>
<text x="1712.31" y="881.50" font-size="26.18" font-weight="normal" textLength="83.30" lengthAdjust="spacingAndGlyphs" fill="#222222" stroke="#ffffff" stroke-width="0.5">387143</text>
<text x="1813.25" y="881.50" font-size="26.18" font-weight="normal" textLength="127.69" lengthAdjust="spacingAndGlyphs" fill="#222222" stroke="#ffffff" stroke-width="0.5">2013-01-02</text>
<text x="725.84" y="927.50" font-size="26.18" font-weight="normal" textLength="13.88" lengthAdjust="spacingAndGlyphs" fill="#222222" stroke="#f3f2f5" stroke-width="0.5">9</text>
<text x="913.87" y="927.50" font-size="26.18" font-weight="normal" textLength="41.65" lengthAdjust="spacingAndGlyphs" fill="#222222" stroke="#ffffff" stroke-width="0.5">805</text>
<text x="1142.12" y="927.50" font-size="26.18" font-weight="normal" textLength="41.65" lengthAdjust="spacingAndGlyphs" fill="#222222" stroke="#ffffff" stroke-width="0.5">737</text>
<text x="1358.08" y="927.50" font-size="26.18" font-weight="normal" textLength="55.53" lengthAdjust="spacingAndGlyphs" fill="#222222" stroke="#ffffff" stroke-width="0.5">1916</text>
<text x="1582.02" y="927.50" font-size="26.18" font-weight="normal" textLength="55.53" lengthAdjust="spacingAndGlyphs" fill="#222222" stroke="#ffffff" stroke-width="0.5">1605</text>
<text x="1712.25" y="927.50" font-size="26.18" font-weight="normal" textLength="83.30" lengthAdjust="spacingAndGlyphs" fill="#222222" stroke="#ffffff" stroke-width="0.5">408455</text>
<text x="1813.25" y="927.50" font-size="26.18" font-weight="normal" textLength="127.69" lengthAdjust="spacingAndGlyphs" fill="#222222" stroke="#ffffff" stroke-width="0.5">2013-01-03</text>
<text x="718.48" y="973.50" font-size="26.18" font-weight="normal" textLength="27.77" lengthAdjust="spacingAndGlyphs" fill="#222222" stroke="#f3f2f5" stroke-width="0.5">10</text>
<text x="941.58" y="973.50" font-size="26.18" font-weight="normal" textLength="13.88" lengthAdjust="spacingAndGlyphs" fill="#222222" stroke="#ffffff" stroke-width="0.5">0</text>
<text x="1141.87" y="973.50" font-size="26.18" font-weight="normal" textLength="41.65" lengthAdjust="spacingAndGlyphs" fill="#222222" stroke="#ffffff" stroke-width="0.5">805</text>
<text x="1399.58" y="973.50" font-size="26.18" font-weight="normal" textLength="13.88" lengthAdjust="spacingAndGlyphs" fill="#222222" stroke="#ffffff" stroke-width="0.5">0</text>
<text x="1623.58" y="973.50" font-size="26.18" font-weight="normal" textLength="13.88" lengthAdjust="spacingAndGlyphs" fill="#222222" stroke="#ffffff" stroke-width="0.5">0</text>
<text x="1712.38" y="973.50" font-size="26.18" font-weight="normal" textLength="83.30" lengthAdjust="spacingAndGlyphs" fill="#222222" stroke="#ffffff" stroke-width="0.5">371309</text>
<text x="1813.25" y="973.50" font-size="26.18" font-weight="normal" textLength="127.69" lengthAdjust="spacingAndGlyphs" fill="#222222" stroke="#ffffff" stroke-width="0.5">2013-01-02</text>
</svg>
</div></body></html>
